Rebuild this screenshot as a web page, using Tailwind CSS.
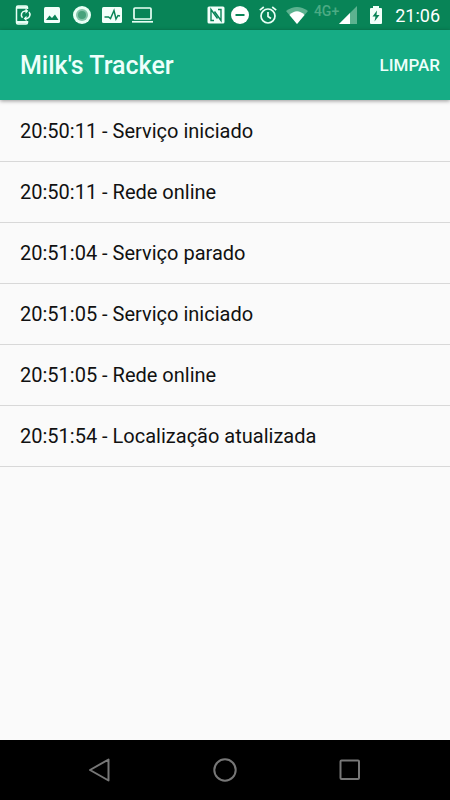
<!DOCTYPE html>
<html lang="pt-BR">
<head>
    <meta charset="UTF-8">
    <meta name="viewport" content="width=device-width, initial-scale=1.0">
    <title>Milk's Tracker</title>
    <script src="https://cdn.jsdelivr.net/npm/@tailwindcss/browser@4"></script>
</head>
<body class="min-h-screen flex flex-col bg-[#fafafa] font-[Roboto,sans-serif] text-[#111111]">
    <!-- status bar -->
    <div class="h-[30px] flex items-center justify-between pl-3 pr-[10px] bg-[#088457] text-white">
        <div class="flex items-center gap-[10px]">
            <svg class="size-5" viewBox="0 0 20 20" fill="none" stroke="#e8fff5">
                <path d="M15.500 4V2.500Q15.500 1 14 1H6Q4.500 1 4.500 2.500V17.500Q4.500 19 6 19H14Q15.500 19 15.500 17.500V16" stroke-width="1.500"/>
                <path d="M5 2.500H15M5 17.300H15" stroke-width="2.500"/>
                <path d="M10.500 12.800A4 4 0 0 1 13 6H14M17 7A4 4 0 0 1 15 13.500H14" stroke-width="1.500"/>
                <path d="M13.500 3.300L16.300 6L13.500 8.700ZM14.500 10.800L11.700 13.500L14.500 16.200Z" fill="#e8fff5" stroke="none"/>
            </svg>
            <svg class="size-5" viewBox="0 0 20 20">
                <rect x="2" y="2" width="16" height="16" rx="1.500" fill="#f2fffa"/>
                <path d="M4 15L7.500 10.500L10 13L13 9.500L16.500 15Z" fill="#088457"/>
            </svg>
            <svg class="size-5" viewBox="0 0 20 20">
                <circle cx="10" cy="10" r="9" fill="#e8fff5"/>
                <circle cx="10" cy="10" r="6" fill="#83c5aa"/>
                <circle cx="10" cy="10" r="4" fill="#47a27c"/>
            </svg>
            <svg class="size-5" viewBox="0 0 20 20">
                <rect y="2" width="20" height="16" rx="1.500" fill="#f2fffa"/>
                <path d="M2.500 12H6.500L8.500 13.500L12 5.500L14 14L16 10.500L18 11" fill="none" stroke="#088457" stroke-width="1.500"/>
            </svg>
            <svg class="size-5 overflow-visible" viewBox="0 0 20 20" fill="none" stroke="#e8fff5" stroke-width="1.700">
                <rect x="2" y="3" width="17" height="11" rx="1"/>
                <path d="M0 16.800H21"/>
            </svg>
        </div>
        <div class="flex items-center">
            <svg class="size-[18px] mr-[6px]" viewBox="0 0 18 18">
                <rect x="0.500" y="0.500" width="17" height="17" rx="1.500" fill="#f2fffa"/>
                <path d="M7 14.500H4V3.500L10.500 12.500M11 3.500H14V14.500L7.500 5.500" fill="none" stroke="#088457" stroke-width="1.400"/>
            </svg>
            <svg class="size-[18px] mr-[10px]" viewBox="0 0 18 18">
                <circle cx="9" cy="9" r="9" fill="white"/>
                <path d="M4.500 9H13.500" stroke="#088457" stroke-width="2"/>
            </svg>
            <svg class="size-[18px] mr-2" viewBox="0 0 18 18" fill="none" stroke="#e8fff5" stroke-width="1.700">
                <circle cx="9" cy="10" r="7"/>
                <path d="M9 6V10.500L12 12.500M0.800 4.200L4.800 1M17.200 4.200L13.200 1"/>
            </svg>
            <svg class="w-6 h-[18px] mr-[5px]" viewBox="0 0 24 18">
                <path d="M1 5Q12 -3 23 5L12 18Z" fill="#5cb28f"/>
                <path d="M4.500 9Q12 1.500 19.500 9L12 18Z" fill="white"/>
            </svg>
            <span class="-mt-2 text-sm leading-4 font-medium text-[#4bab84]">4G+</span>
            <svg class="size-[18px] mr-3" viewBox="0 0 18 18">
                <path d="M0 18L18 0V18Z" fill="#5cb28f"/>
                <path d="M0 18L11 7V18Z" fill="white"/>
            </svg>
            <svg class="w-[14px] h-[18px] mr-3" viewBox="0 0 14 18">
                <path d="M4 0H10V2H12Q13 2 13 3V17Q13 18 12 18H2Q1 18 1 17V3Q1 2 2 2H4Z" fill="#f2fffa"/>
                <path d="M8 4.500L3.500 10.500H6.500L5.500 15.500L10.500 9H7.500Z" fill="#088457"/>
            </svg>
            <span class="pt-px text-lg leading-5">21:06</span>
        </div>
    </div>

    <!-- toolbar -->
    <header class="h-[70px] flex items-center justify-between pt-0.5 pl-5 pr-[10px] bg-[#16ac85] text-[#edfffb] shadow-[0_1px_4px_rgba(0,0,0,0.4)]">
        <h1 class="text-[25px] font-medium">Milk's Tracker</h1>
        <button type="button" class="text-[17px] font-medium">LIMPAR</button>
    </header>

    <main class="flex-1 pt-px">
        <ul class="text-xl leading-[60px] *:px-5 *:border-b *:border-[#d8d8d8]">
            <li>20:50:11 - Serviço iniciado</li>
            <li>20:50:11 - Rede online</li>
            <li>20:51:04 - Serviço parado</li>
            <li>20:51:05 - Serviço iniciado</li>
            <li>20:51:05 - Rede online</li>
            <li>20:51:54 - Localização atualizada</li>
        </ul>
    </main>

    <!-- navigation bar -->
    <nav class="h-[60px] flex items-center justify-center gap-[101px] bg-black">
        <button type="button" aria-label="Voltar">
            <svg class="size-6" viewBox="0 0 24 24" fill="none" stroke="#777777" stroke-width="2" stroke-linejoin="round"><path d="M20.500 1.500V22.500L2 12Z"/></svg>
        </button>
        <button type="button" aria-label="Início">
            <svg class="size-6" viewBox="0 0 24 24" fill="none" stroke="#777777" stroke-width="2"><circle cx="12" cy="12" r="10.700"/></svg>
        </button>
        <button type="button" aria-label="Recentes">
            <svg class="size-6" viewBox="0 0 24 24" fill="none" stroke="#777777" stroke-width="2"><rect x="2.500" y="2.500" width="18.500" height="18.500" rx="1"/></svg>
        </button>
    </nav>
</body>
</html>
